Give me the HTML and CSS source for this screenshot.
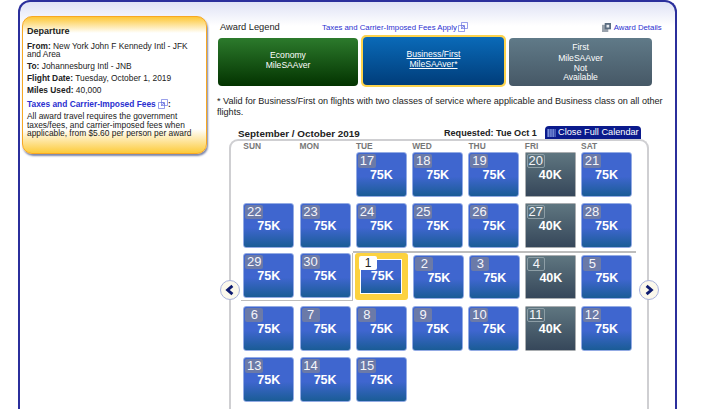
FILE: index.html
```html
<!DOCTYPE html>
<html lang="en">
<head>
    <meta charset="UTF-8">
    <meta name="viewport" content="width=device-width, initial-scale=1.0">
    <title>Award Calendar</title>
    <link rel="stylesheet" href="styles.css">
</head>
<body>

    <div class="panel">
        <!-- Trip summary -->
        <div class="summary">
            <h3>Departure</h3>
            <p><b>From:</b> New York John F Kennedy Intl - JFK and Area</p>
            <p><b>To:</b> Johannesburg Intl - JNB</p>
            <p><b>Flight Date:</b> Tuesday, October 1, 2019</p>
            <p><b>Miles Used:</b> 40,000</p>
            <p class="fees-title"><a href="#">Taxes and Carrier-Imposed Fees</a>
                <svg class="ext" viewBox="0 0 10 10"><path d="M3.5.5h6v6h-6z M.5 3.5h6v6h-6z M3 7l3-3M4 3.8h2.2V6" fill="none" stroke="#5560dc" stroke-width=".6"/></svg><b>:</b></p>
            <p class="fees-text">All award travel requires the government taxes/fees, and carrier-imposed fees when applicable, from $5.60 per person per award</p>
        </div>

        <div class="main">
            <div class="legend-head">
                <span class="legend-title">Award Legend</span>
                <a class="fees-link" href="#">Taxes and Carrier-Imposed Fees Apply</a>
                <svg class="ext" viewBox="0 0 10 10"><path d="M3.5.5h6v6h-6z M.5 3.5h6v6h-6z M3 7l3-3M4 3.8h2.2V6" fill="none" stroke="#5560dc" stroke-width=".6"/></svg>
                <svg class="details-icon" viewBox="0 0 10 10"><path d="M0 2h7v8H0z" fill="#9aa3ad"/><path d="M3 0h7v7H3z" fill="#5a6c80"/><path d="M5 2h3v3H5z" fill="#e8ecf2"/></svg>
                <a class="details-link" href="#">Award Details</a>
            </div>

            <div class="legend">
                <div class="award economy">Economy<br>MileSAAver</div>
                <div class="award-wrap"><a class="award business" href="#">Business/First<br>MileSAAver*</a></div>
                <div class="award first">
                    <span class="first-top">First</span>
                    <span class="first-top">MileSAAver</span>
                    <span>Not</span>
                    <span>Available</span>
                </div>
            </div>

            <p class="note">* Valid for Business/First on flights with two classes of service where applicable and Business class on all other flights.</p>

            <div class="cal-head">
                <span class="cal-title">September / October 2019</span>
                <span class="cal-requested">Requested: Tue Oct 1</span>
                <a class="cal-close" href="#">
                    <svg viewBox="0 0 9 9"><path d="M0 0h9v9H0z" fill="#8ea6ea"/><path d="M2 0v9M4 0v9M6 0v9M8 0v9" stroke="#0a1a8c" stroke-width=".8"/></svg>
                    Close Full Calendar
                </a>
            </div>

            <div class="calendar">
                <button class="nav prev"><svg viewBox="0 0 10 10"><path d="M7 1.5L3 5l4 3.5" fill="none" stroke="#0d1a70" stroke-width="2.4"/></svg></button>
                <button class="nav next"><svg viewBox="0 0 10 10"><path d="M3 1.5L7 5 3 8.500" fill="none" stroke="#0d1a70" stroke-width="2.4"/></svg></button>

                <div class="days">
                    <span>SUN</span><span>MON</span><span>TUE</span><span>WED</span><span>THU</span><span>FRI</span><span>SAT</span>
                </div>

                <div class="row">
                    <div class="day empty"></div>
                    <div class="day empty"></div>
                    <div class="day"><span class="num">17</span><span class="miles">75K</span></div>
                    <div class="day"><span class="num">18</span><span class="miles">75K</span></div>
                    <div class="day"><span class="num">19</span><span class="miles">75K</span></div>
                    <div class="day gray"><span class="num">20</span><span class="miles">40K</span></div>
                    <div class="day"><span class="num">21</span><span class="miles">75K</span></div>
                </div>
                <div class="row">
                    <div class="day"><span class="num">22</span><span class="miles">75K</span></div>
                    <div class="day"><span class="num">23</span><span class="miles">75K</span></div>
                    <div class="day"><span class="num">24</span><span class="miles">75K</span></div>
                    <div class="day"><span class="num">25</span><span class="miles">75K</span></div>
                    <div class="day"><span class="num">26</span><span class="miles">75K</span></div>
                    <div class="day gray"><span class="num">27</span><span class="miles">40K</span></div>
                    <div class="day"><span class="num">28</span><span class="miles">75K</span></div>
                </div>

                <!-- Requested week, the line steps up around the selected day -->
                <div class="week">
                    <div class="week-before">
                        <div class="day"><span class="num">29</span><span class="miles">75K</span></div>
                        <div class="day"><span class="num">30</span><span class="miles">75K</span></div>
                    </div>
                    <div class="week-after">
                        <div class="selected">
                            <span class="num">1</span>
                            <div class="selected-inner"><span class="miles">75K</span></div>
                        </div>
                        <div class="day"><span class="num">2</span><span class="miles">75K</span></div>
                        <div class="day"><span class="num">3</span><span class="miles">75K</span></div>
                        <div class="day gray"><span class="num">4</span><span class="miles">40K</span></div>
                        <div class="day"><span class="num">5</span><span class="miles">75K</span></div>
                    </div>
                </div>

                <div class="row">
                    <div class="day"><span class="num">6</span><span class="miles">75K</span></div>
                    <div class="day"><span class="num">7</span><span class="miles">75K</span></div>
                    <div class="day"><span class="num">8</span><span class="miles">75K</span></div>
                    <div class="day"><span class="num">9</span><span class="miles">75K</span></div>
                    <div class="day"><span class="num">10</span><span class="miles">75K</span></div>
                    <div class="day gray"><span class="num">11</span><span class="miles">40K</span></div>
                    <div class="day"><span class="num">12</span><span class="miles">75K</span></div>
                </div>
                <div class="row">
                    <div class="day"><span class="num">13</span><span class="miles">75K</span></div>
                    <div class="day"><span class="num">14</span><span class="miles">75K</span></div>
                    <div class="day"><span class="num">15</span><span class="miles">75K</span></div>
                </div>
            </div>
        </div>
    </div>

</body>
</html>
```

FILE: styles.css
```css
html, body {
    margin: 0;
    padding: 0;
    height: 409px;
    overflow: hidden;
    background: #fff;
    font-family: "Liberation Sans", Arial, sans-serif;
    color: #222;
}
a {
    color: #2a2fd0;
    text-decoration: none;
}
.panel {
    display: flex;
    width: 655px;
    height: 450px;
    margin-left: 18px;
    border: 2px solid #2b2f9c;
    border-bottom: none;
    border-radius: 12px 12px 0 0;
    background: linear-gradient(#dfe2f5, #fff 24px);
}

/* Trip summary */
.summary {
    box-sizing: border-box;
    flex: none;
    width: 185px;
    height: 138px;
    margin: 14px 0 0 2px;
    padding: 9px 3px 0 4px;
    border: 1.5px solid #f7a823;
    border-radius: 10px;
    box-shadow: 1px 2px 2px #7d86a8;
    background: linear-gradient(#fdc737, #fff 16px, #fff 112px, #fdcb3a);
    font-size: 8.400px;
    line-height: 8.400px;
}
.summary h3 {
    margin: 0 0 5px;
    font-size: 9px;
    line-height: 11px;
}
.summary p {
    margin: 0 0 3.600px;
}
.summary .fees-title {
    margin: 4px 0 3.500px;
    font-weight: bold;
}
.fees-title a {
    font-weight: bold;
}
.summary .fees-text {
    line-height: 8.300px;
}
.ext {
    flex: none;
    width: 10px;
    height: 10px;
    vertical-align: -2px;
}

/* Award legend */
.main {
    flex: none;
    width: 450px;
    margin-left: 11px;
    padding-top: 18px;
}
.legend-head {
    display: flex;
    align-items: center;
    height: 14px;
    margin-bottom: 4px;
    font-size: 7.800px;
    white-space: nowrap;
}
.legend-title {
    width: 102px;
    padding-left: 2px;
    font-size: 9.300px;
}
.fees-link {
    margin-right: 1px;
}
.details-icon {
    flex: none;
    width: 9px;
    height: 9px;
    margin-left: 134px;
    margin-right: 3px;
}
.legend {
    display: flex;
    align-items: center;
    height: 48px;
}
.award {
    box-sizing: border-box;
    display: flex;
    align-items: center;
    justify-content: center;
    flex-direction: column;
    height: 48px;
    border-radius: 4px;
    color: #fff;
    font-size: 8.600px;
    line-height: 10.300px;
    text-align: center;
}
.economy {
    display: block;
    width: 140px;
    padding-top: 12px;
    background: linear-gradient(#2c7a2c, #033300);
}
.award-wrap {
    margin: -2px 3px 0 3px;
    padding: 2px;
    border-radius: 5px;
    background: #fcd34d;
}
.business {
    display: block;
    width: 141px;
    padding-top: 12px;
    background: linear-gradient(#0a6ab8, #003d7a);
    text-decoration: underline;
}
.first {
    width: 143px;
    background: linear-gradient(#607a88, #465866);
    line-height: 8.500px;
}
.first span {
    display: block;
}
.first .first-top {
    margin-bottom: 2px;
}
.note {
    width: 452px;
    margin: 10px 0 0 -1px;
    font-size: 9.100px;
    line-height: 11px;
}

/* Calendar */
.cal-head {
    display: flex;
    align-items: flex-start;
    height: 13px;
    margin-top: 8px;
    padding-left: 20px;
    font-size: 9.900px;
    font-weight: bold;
    line-height: 15px;
    white-space: nowrap;
}
.cal-title {
    width: 206px;
}
.cal-requested {
    width: 93px;
    font-size: 9.100px;
}
.cal-close {
    display: flex;
    align-items: center;
    gap: 2px;
    box-sizing: border-box;
    width: 96px;
    height: 13px;
    margin-left: 8px;
    padding-left: 2px;
    border-radius: 4px 4px 0 0;
    background: #0a1a8c;
    color: #fff;
    font-size: 9.200px;
    font-weight: normal;
}
.cal-close svg {
    flex: none;
    width: 9px;
    height: 8px;
}
.calendar {
    position: relative;
    box-sizing: border-box;
    width: 420px;
    height: 300px;
    margin-left: 11px;
    padding: 0 0 0 12.300px;
    border: 2px solid #cfcfd2;
    border-bottom: none;
    border-radius: 9px 9px 0 0;
    background: #fff;
}
.days {
    display: flex;
    gap: 5.300px;
    height: 11px;
    color: #777;
    font-size: 8.400px;
    font-weight: bold;
    line-height: 10px;
}
.days span {
    width: 51px;
}
.row {
    display: flex;
    gap: 5.300px;
    margin-bottom: 6px;
}
.day {
    box-sizing: border-box;
    flex: none;
    width: 51px;
    height: 45px;
    padding: 1px;
    border: 1px solid #93abe4;
    border-radius: 3px;
    background: linear-gradient(#3f66cf 55%, #1a5c96);
}
.day.empty {
    border: none;
    background: none;
}
.day.gray {
    border-color: #a9adb0;
    border-radius: 1px;
    background: linear-gradient(#5f7680, #36475a);
}
.num {
    display: block;
    box-sizing: border-box;
    width: 18px;
    height: 14px;
    border-radius: 2px;
    background: #6b7aa8;
    color: #f4f5fa;
    font-size: 13px;
    line-height: 14px;
    text-align: center;
}
.gray .num {
    border: 1px solid #8d9ea6;
    background: none;
    line-height: 12px;
}
.miles {
    display: block;
    color: #fff;
    font-size: 12.500px;
    font-weight: bold;
    line-height: 15px;
    text-align: center;
}

/* Requested week */
.week {
    display: flex;
    margin: -3px 0 5px -2px;
}
.week-before {
    display: flex;
    gap: 5.300px;
    height: 45.500px;
    margin-top: 2px;
    padding: 0 1.300px 1px 2px;
    border-right: 1.500px solid #bdbdbd;
    border-bottom: 1.500px solid #bdbdbd;
}
.week-after {
    display: flex;
    gap: 5px;
    height: 47px;
    padding: 0 3.500px 0 2.200px;
    border-top: 2px solid #bdbdbd;
}
.week-after .day {
    height: 44px;
    margin-top: 2px;
}
.selected {
    position: relative;
    box-sizing: border-box;
    flex: none;
    width: 53.300px;
    height: 47px;
    padding: 6px 6px 6px 5px;
    border-radius: 3px;
    background: #fcd23f;
}
.selected-inner {
    box-sizing: border-box;
    height: 35px;
    padding: 9px 0 0 2px;
    border: 1.500px solid #fff;
    background: linear-gradient(#3f66cf 50%, #1a5c96);
}
.selected .num {
    position: absolute;
    top: 3px;
    left: 4px;
    background: #fff;
    color: #222;
    font-size: 12px;
}

/* Month arrows */
.nav {
    position: absolute;
    top: 139px;
    box-sizing: border-box;
    width: 20px;
    height: 20px;
    padding: 3px;
    border: 1px solid #a9b2dc;
    border-radius: 50%;
    background: #fbf8ec;
}
.nav svg {
    display: block;
    width: 12px;
    height: 12px;
}
.prev {
    left: -11px;
}
.next {
    right: -12px;
}
```
